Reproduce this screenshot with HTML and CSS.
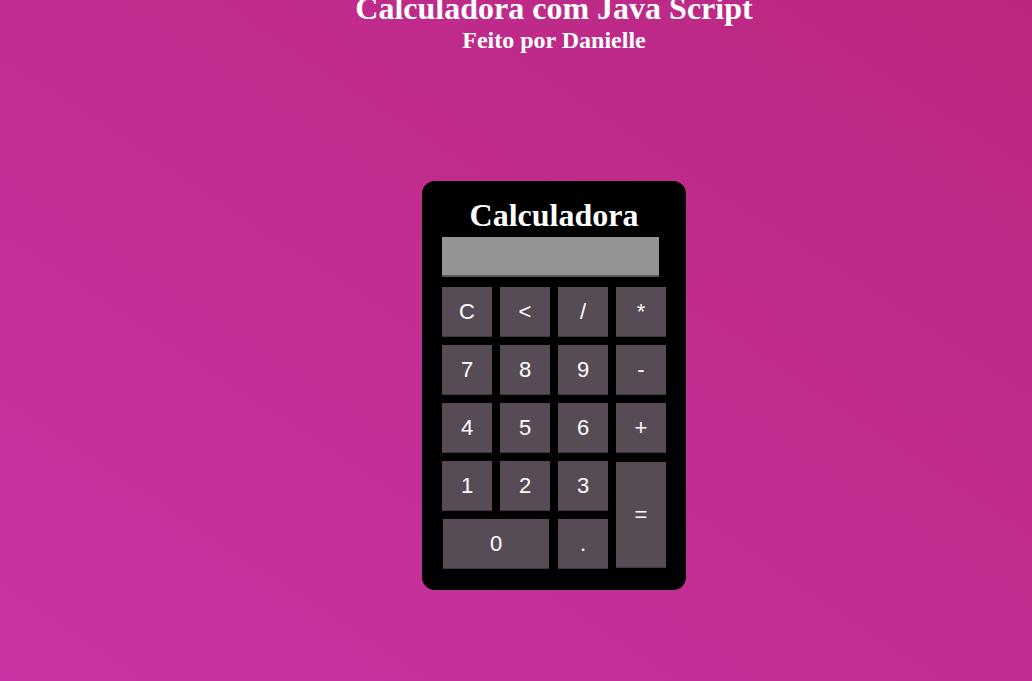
FILE: index.html
```html
<!DOCTYPE html>
<html lang="pt">
<head>
<meta charset="utf-8">
<title>Calculadora</title>
<link rel="stylesheet" href="styles.css">
</head>
<body>
<div class="page">
  <header class="header">
    <h1 class="header-title">Calculadora com Java Script</h1>
    <h2 class="header-sub">Feito por Danielle</h2>
  </header>
  <main class="calc">
    <h2 class="calc-title">Calculadora</h2>
    <div class="display"></div>
    <div class="keys">
      <button class="key">C</button>
      <button class="key">&lt;</button>
      <button class="key">/</button>
      <button class="key">*</button>
      <button class="key">7</button>
      <button class="key">8</button>
      <button class="key">9</button>
      <button class="key">-</button>
      <button class="key">4</button>
      <button class="key">5</button>
      <button class="key">6</button>
      <button class="key">+</button>
      <button class="key">1</button>
      <button class="key">2</button>
      <button class="key">3</button>
      <button class="key key-eq">=</button>
      <button class="key key-zero">0</button>
      <button class="key">.</button>
    </div>
  </main>
</div>
</body>
</html>
```

FILE: styles.css
```css
html, body {
  margin: 0;
  padding: 0;
  height: 100%;
}
body {
  background: linear-gradient(to top right, #c933a3, #bb2780);
  font-family: "Liberation Serif", "Times New Roman", serif;
  color: #fff;
  overflow: hidden;
}
.page {
  padding-left: 76px;
  display: flex;
  flex-direction: column;
  align-items: center;
}
.header {
  text-align: center;
  margin-top: -8px;
}
.header-title {
  margin: 0;
  font-size: 32px;
  line-height: 32px;
  font-weight: bold;
}
.header-sub {
  margin: 2px 0 0;
  font-size: 24px;
  line-height: 28px;
  font-weight: bold;
}
.calc {
  margin-top: 127px;
  width: 264px;
  box-sizing: border-box;
  background: #000;
  border-radius: 13px;
  padding: 17px 20px 21px;
}
.calc-title {
  margin: 0 0 5px;
  text-align: center;
  font-size: 32px;
  line-height: 34px;
  font-weight: bold;
}
.display {
  width: 217px;
  height: 40px;
  box-sizing: border-box;
  background: #949494;
  border-bottom: 2px solid #5a5a5a;
  margin-bottom: 10px;
}
.keys {
  display: grid;
  grid-template-columns: repeat(4, 50px);
  grid-auto-rows: 50px;
  gap: 8px;
}
.key {
  margin: 0;
  padding: 0;
  border: none;
  border-bottom: 1px solid #403840;
  background: #574c56;
  color: #fff;
  font-family: "Liberation Sans", Arial, sans-serif;
  font-size: 22px;
}
.key-eq {
  grid-column: 4;
  grid-row: 4 / span 2;
  margin: 1px 0;
}
.key-zero {
  grid-column: 1 / span 2;
  margin: 0 1px;
}
```
